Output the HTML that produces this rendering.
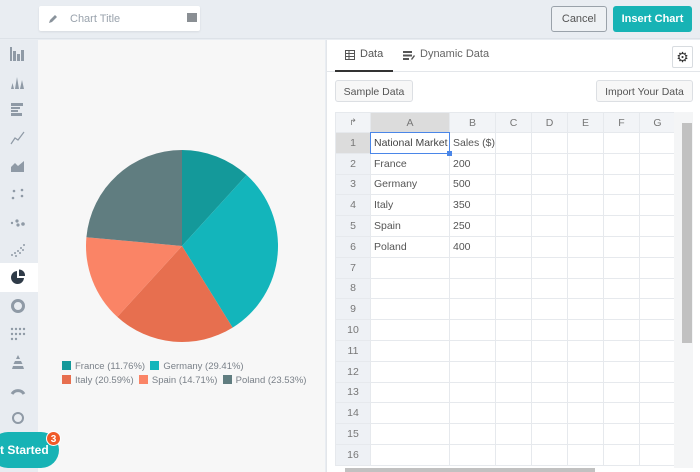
<!DOCTYPE html>
<html><head><meta charset="utf-8"><style>
*{box-sizing:border-box;margin:0;padding:0}
body{width:700px;height:472px;overflow:hidden;font-family:"Liberation Sans",sans-serif;background:#e9edf2;position:relative;color:#444}
.abs{position:absolute}
#top{left:0;top:0;width:700px;height:39px;background:#e9edf2;border-bottom:1px solid #dde2e8}
#title{left:39px;top:6px;width:161px;height:25px;background:#fff;border-radius:2px;box-shadow:0 1px 2px rgba(0,0,0,.08);font-size:11px;color:#9aa3ad;padding:7px 0 0 31px}
.btn{font-size:11px;border-radius:3px;text-align:center}
#side{left:0;top:40px;width:38px;height:432px;background:#e8ecf1}
#chart{left:38px;top:40px;width:287px;height:432px;background:#f7f7f7}
#right{left:326px;top:40px;width:374px;height:432px;background:#fff;border-left:1px solid #e3e6ea}
table{border-collapse:collapse;position:absolute;left:335px;top:112px;table-layout:fixed;font-size:10.5px}
td{border:1px solid #e6e9ed;height:20.8px;padding:0 0 0 3px;color:#555;white-space:nowrap;overflow:hidden}
tr:first-child td{height:20px;background:#f2f4f7;color:#777;text-align:center;padding:0}
td.h{background:#eef1f5;text-align:center;color:#777;padding:0}
.ic{position:absolute;left:10px;width:16px;height:16px}
.leg{font-size:9.5px;color:#7a8189}
.sq{display:inline-block;width:9px;height:9px;vertical-align:-1px;margin-right:4px}
</style></head><body>
<div id="top" class="abs"></div>
<div id="title" class="abs">Chart Title
<svg class="abs" style="left:9px;top:8px" width="10" height="10" viewBox="0 0 10 10"><path d="M1 9 L2 6 L7 1 L9 3 L4 8Z" fill="#8a939c"/></svg>
<div class="abs" style="right:3px;top:7px;width:10px;height:9px;background:#8a8f94"></div></div>
<div class="abs btn" style="left:551px;top:6px;width:56px;height:26px;border:1px solid #9aa2aa;color:#555;line-height:24px;background:#eef1f4">Cancel</div>
<div class="abs btn" style="left:613px;top:6px;width:79px;height:26px;background:#17b3b5;color:#fff;font-weight:bold;line-height:26px">Insert Chart</div>

<div id="side" class="abs">
<div class="abs" style="left:0;top:223px;width:38px;height:29px;background:#fff"></div>
<svg class="ic" style="top:6px" viewBox="0 0 16 16" fill="#8f9aa6"><rect x="0" y="1" width="2" height="14"/><rect x="3" y="5" width="3" height="10"/><rect x="7" y="8" width="3" height="7"/><rect x="11" y="4" width="3" height="11"/></svg>
<svg class="ic" style="top:34px" viewBox="0 0 16 16" fill="#8f9aa6"><path d="M1 15L2.5 9L4 15ZM5 15L7 3L9 15ZM10 15L12 6L14 15Z"/></svg>
<svg class="ic" style="top:62px" viewBox="0 0 16 16" fill="#8f9aa6"><rect x="1" y="1" width="12" height="3"/><rect x="1" y="5" width="9" height="2"/><rect x="1" y="8" width="7" height="2"/><rect x="1" y="11" width="11" height="3"/></svg>
<svg class="ic" style="top:90px" viewBox="0 0 16 16" fill="none" stroke="#8f9aa6" stroke-width="1.2"><path d="M1 14L5 8L8 10L14 2"/></svg>
<svg class="ic" style="top:118px" viewBox="0 0 16 16" fill="#8f9aa6"><path d="M1 14V9L5 5L8 8L14 3V14Z"/></svg>
<svg class="ic" style="top:146px" viewBox="0 0 16 16" fill="#8f9aa6"><circle cx="4" cy="5" r="1.3"/><circle cx="12" cy="4" r="1.3"/><circle cx="3" cy="12" r="1.3"/><circle cx="12" cy="10" r="1.3"/></svg>
<svg class="ic" style="top:174px" viewBox="0 0 16 16" fill="#8f9aa6"><circle cx="2" cy="9" r="1.2"/><circle cx="7" cy="7" r="1.6"/><circle cx="8" cy="11" r="1.6"/><circle cx="13" cy="10" r="1.8"/></svg>
<svg class="ic" style="top:202px" viewBox="0 0 16 16" fill="#8f9aa6"><circle cx="2" cy="13" r="1"/><circle cx="5" cy="11" r="1"/><circle cx="8" cy="9" r="1"/><circle cx="11" cy="6" r="1"/><circle cx="14" cy="3" r="1"/><circle cx="6" cy="14" r="1"/><circle cx="10" cy="11" r="1"/><circle cx="13" cy="8" r="1"/></svg>
<svg class="ic" style="top:229px" viewBox="0 0 16 16" fill="#2f3b48"><path d="M7 2A6.5 6.5 0 1 0 14 9H7Z"/><path d="M9 0.5A6 6 0 0 1 15 7H9Z"/></svg>
<svg class="ic" style="top:258px" viewBox="0 0 16 16"><circle cx="8" cy="8" r="5.5" fill="none" stroke="#8f9aa6" stroke-width="3"/></svg>
<svg class="ic" style="top:286px" viewBox="0 0 16 16" fill="#8f9aa6"><g><circle cx="2" cy="3" r="1.2"/><circle cx="6" cy="3" r="1.2"/><circle cx="10" cy="3" r="1.2"/><circle cx="14" cy="3" r="1.2"/><circle cx="2" cy="8" r="1.2"/><circle cx="6" cy="8" r="1.2"/><circle cx="10" cy="8" r="1.2"/><circle cx="14" cy="8" r="1.2"/><circle cx="2" cy="13" r="1.2"/><circle cx="6" cy="13" r="1.2"/></g></svg>
<svg class="ic" style="top:314px" viewBox="0 0 16 16" fill="#8f9aa6"><path d="M6 5L8 1L10 5Z M5 7H11L12.5 10H3.5Z M3 12H13L14 15H2Z"/></svg>
<svg class="ic" style="top:342px" viewBox="0 0 16 16" fill="none" stroke="#8f9aa6" stroke-width="3"><path d="M2 12A7 7 0 0 1 14 12"/></svg>
<svg class="ic" style="top:370px" viewBox="0 0 16 16"><circle cx="8" cy="8" r="5" fill="none" stroke="#8f9aa6" stroke-width="2"/></svg>
</div>

<div id="chart" class="abs"></div>
<svg class="abs" style="left:0;top:0" width="325" height="472">
<path d="M182 246L182 150A96 96 0 0 1 246.6 175Z" fill="#14999a"/>
<path d="M182 246L246.6 175A96 96 0 0 1 232.6 327.6Z" fill="#13b5bb"/>
<path d="M182 246L232.6 327.6A96 96 0 0 1 117.3 316.9Z" fill="#e76f4f"/>
<path d="M182 246L117.3 316.9A96 96 0 0 1 86.4 237.2Z" fill="#fa8466"/>
<path d="M182 246L86.4 237.2A96 96 0 0 1 182 150Z" fill="#607d80"/>
</svg>
<div class="abs leg" style="left:62px;top:361px"><span class="sq" style="background:#14999a"></span>France (11.76%) &nbsp;<span class="sq" style="background:#13b5bb"></span>Germany (29.41%)</div>
<div class="abs leg" style="left:62px;top:375px"><span class="sq" style="background:#e76f4f"></span>Italy (20.59%) &nbsp;<span class="sq" style="background:#fa8466"></span>Spain (14.71%) &nbsp;<span class="sq" style="background:#607d80"></span>Poland (23.53%)</div>
<div class="abs" style="left:-10px;top:432px;width:69px;height:36px;background:#17b3b5;border-radius:18px;color:#fff;font-size:12px;font-weight:bold;padding:11px 0 0 10px">t Started</div>
<div class="abs" style="left:46px;top:431px;width:15px;height:15px;background:#f05a28;border-radius:50%;color:#fff;font-size:10px;font-weight:bold;text-align:center;line-height:15px;border:1px solid #fff">3</div>

<div id="right" class="abs"></div>
<div class="abs" style="left:326px;top:71px;width:374px;height:1px;background:#e3e6ea"></div>
<div class="abs" style="left:335px;top:70px;width:58px;height:2px;background:#333"></div>
<svg class="abs" style="left:345px;top:50px" width="10" height="10" viewBox="0 0 10 10" fill="none" stroke="#555"><rect x=".5" y=".5" width="9" height="9"/><path d="M.5 3.5H9.5M.5 6.5H9.5M4 .5V9.5"/></svg>
<div class="abs" style="left:360px;top:48px;font-size:11px;color:#555">Data</div>
<svg class="abs" style="left:403px;top:51px" width="12" height="9" viewBox="0 0 12 9" fill="#555"><rect y="0" width="9" height="2"/><rect y="3.5" width="9" height="2"/><rect y="7" width="6" height="2"/><path d="M8 8L11 4L12 5L9 9Z"/></svg>
<div class="abs" style="left:420px;top:48px;font-size:11px;color:#666">Dynamic Data</div>
<div class="abs" style="left:672px;top:46px;width:21px;height:22px;border:1px solid #d8dce0;border-radius:2px;font-size:14px;text-align:center;line-height:20px;color:#333">⚙</div>
<div class="abs btn" style="left:335px;top:80px;width:78px;height:22px;border:1px solid #dcdfe3;background:#f7f7f7;color:#555;padding-top:5px;font-size:10.5px">Sample Data</div>
<div class="abs btn" style="left:596px;top:80px;width:97px;height:22px;border:1px solid #dcdfe3;background:#f7f7f7;color:#555;padding-top:5px;font-size:10.5px">Import Your Data</div>

<table>
<colgroup><col style="width:35px"><col style="width:79px"><col style="width:45px"><col style="width:36px"><col style="width:36px"><col style="width:36px"><col style="width:36px"><col style="width:36px"></colgroup>
<tr><td style="font-size:9px">↱</td><td style="background:#dcdcdc">A</td><td>B</td><td>C</td><td>D</td><td>E</td><td>F</td><td>G</td></tr>
<tr><td class="h" style="background:#dcdcdc">1</td><td style="color:#444">National Market</td><td>Sales ($)</td><td></td><td></td><td></td><td></td><td></td></tr>
<tr><td class="h">2</td><td>France</td><td>200</td><td></td><td></td><td></td><td></td><td></td></tr>
<tr><td class="h">3</td><td>Germany</td><td>500</td><td></td><td></td><td></td><td></td><td></td></tr>
<tr><td class="h">4</td><td>Italy</td><td>350</td><td></td><td></td><td></td><td></td><td></td></tr>
<tr><td class="h">5</td><td>Spain</td><td>250</td><td></td><td></td><td></td><td></td><td></td></tr>
<tr><td class="h">6</td><td>Poland</td><td>400</td><td></td><td></td><td></td><td></td><td></td></tr>
<tr><td class="h">7</td><td></td><td></td><td></td><td></td><td></td><td></td><td></td></tr>
<tr><td class="h">8</td><td></td><td></td><td></td><td></td><td></td><td></td><td></td></tr>
<tr><td class="h">9</td><td></td><td></td><td></td><td></td><td></td><td></td><td></td></tr>
<tr><td class="h">10</td><td></td><td></td><td></td><td></td><td></td><td></td><td></td></tr>
<tr><td class="h">11</td><td></td><td></td><td></td><td></td><td></td><td></td><td></td></tr>
<tr><td class="h">12</td><td></td><td></td><td></td><td></td><td></td><td></td><td></td></tr>
<tr><td class="h">13</td><td></td><td></td><td></td><td></td><td></td><td></td><td></td></tr>
<tr><td class="h">14</td><td></td><td></td><td></td><td></td><td></td><td></td><td></td></tr>
<tr><td class="h">15</td><td></td><td></td><td></td><td></td><td></td><td></td><td></td></tr>
<tr><td class="h">16</td><td></td><td></td><td></td><td></td><td></td><td></td><td></td></tr>
</table>
<div class="abs" style="left:370px;top:132px;width:80px;height:22px;border:1.5px solid #4a86e8"></div>
<div class="abs" style="left:447px;top:151px;width:5px;height:5px;background:#4a86e8"></div>
<div class="abs" style="left:674px;top:112px;width:19px;height:356px;background:#f4f5f6"></div>
<div class="abs" style="left:682px;top:123px;width:10px;height:220px;background:#c1c1c1"></div>
<div class="abs" style="left:345px;top:468px;width:250px;height:4px;background:#c1c1c1"></div>
</body></html>
